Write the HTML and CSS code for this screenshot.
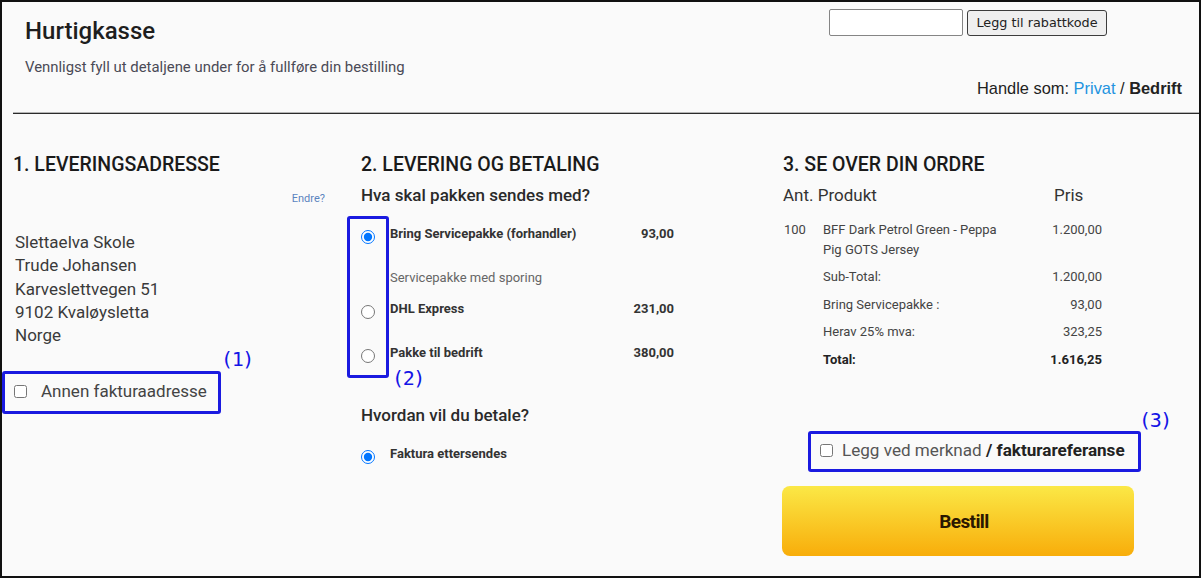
FILE: index.html
```html
<!DOCTYPE html>
<html lang="no">
<head>
<meta charset="utf-8">
<title>Hurtigkasse</title>
<link rel="stylesheet" href="styles.css">
</head>
<body>
<div class="frame">
  <header class="top">
    <div class="intro">
      <h1 class="title">Hurtigkasse</h1>
      <p class="lead">Vennligst fyll ut detaljene under for å fullføre din bestilling</p>
    </div>
    <div class="tools">
      <form class="coupon">
        <input class="coupon-input" type="text" aria-label="Rabattkode">
        <button class="coupon-btn" type="button">Legg til rabattkode</button>
      </form>
      <p class="shopas">Handle som: <a class="link-privat">Privat</a> / <b class="current">Bedrift</b></p>
    </div>
  </header>
  <div class="rule"></div>
  <main class="cols">
    <section class="col">
      <h2 class="col-title">1. LEVERINGSADRESSE</h2>
      <div class="edit-row"><a class="edit-link">Endre?</a></div>
      <address class="addr">Slettaelva Skole<br>Trude Johansen<br>Karveslettvegen 51<br>9102 Kvaløysletta<br>Norge</address>
      <label class="check-row check-billing"><input type="checkbox" class="check"><span>Annen fakturaadresse</span></label>
    </section>

    <section class="col">
      <h2 class="col-title">2. LEVERING OG BETALING</h2>
      <h3 class="sub-title">Hva skal pakken sendes med?</h3>
      <label class="opt opt-first"><input type="radio" name="ship" class="radio" checked><span class="opt-name">Bring Servicepakke (forhandler)</span><span class="opt-price">93,00</span></label>
      <p class="opt-desc">Servicepakke med sporing</p>
      <label class="opt opt-dhl"><input type="radio" name="ship" class="radio"><span class="opt-name">DHL Express</span><span class="opt-price">231,00</span></label>
      <label class="opt opt-bedrift"><input type="radio" name="ship" class="radio"><span class="opt-name">Pakke til bedrift</span><span class="opt-price">380,00</span></label>
      <h3 class="sub-title pay-title">Hvordan vil du betale?</h3>
      <label class="opt opt-pay"><input type="radio" name="pay" class="radio" checked><span class="opt-name">Faktura ettersendes</span></label>
    </section>

    <section class="col">
      <h2 class="col-title">3. SE OVER DIN ORDRE</h2>
      <div class="order-head"><span>Ant. Produkt</span><span>Pris</span></div>
      <div class="order-table">
        <span class="qty">100</span><span class="prod">BFF Dark Petrol Green - Peppa Pig GOTS Jersey</span><span class="amt">1.200,00</span>
        <span class="qty"></span><span class="prod">Sub-Total:</span><span class="amt">1.200,00</span>
        <span class="qty"></span><span class="prod">Bring Servicepakke :</span><span class="amt">93,00</span>
        <span class="qty"></span><span class="prod">Herav 25% mva:</span><span class="amt">323,25</span>
        <span class="qty"></span><span class="prod total">Total:</span><span class="amt total">1.616,25</span>
      </div>
      <label class="check-row check-note"><input type="checkbox" class="check"><span>Legg ved merknad <b class="strong">/ fakturareferanse</b></span></label>
      <button class="order-btn" type="button">Bestill</button>
    </section>
  </main>

  <div class="note note-1"></div>
  <span class="note-label label-1">(1)</span>
  <div class="note note-2"></div>
  <span class="note-label label-2">(2)</span>
  <div class="note note-3"></div>
  <span class="note-label label-3">(3)</span>
</div>
</body>
</html>
```
FILE: styles.css
```css
* { box-sizing: border-box; }

body {
  margin: 0;
  background: #ffffff;
  font-family: Roboto, "Liberation Sans", sans-serif;
}

.frame {
  position: relative;
  width: 1201px;
  height: 578px;
  border: 2px solid #111;
  background: #fafafa;
  overflow: hidden;
}

/* header */
.top {
  display: flex;
  justify-content: space-between;
  padding: 7px 17px 0 23px;
}

.title {
  margin: 8px 0 0;
  font-size: 24px;
  line-height: 28px;
  font-weight: 500;
  color: #1e1e1e;
}

.lead {
  margin: 13px 0 0;
  font-size: 14.9px;
  line-height: 18px;
  color: #4a4a56;
}

.tools {
  display: flex;
  flex-direction: column;
  align-items: flex-end;
}

.coupon {
  display: flex;
  align-items: center;
  gap: 4px;
  margin: 0 75px 0 0;
}

.coupon-input {
  width: 134px;
  height: 27px;
  border: 1px solid #858585;
  border-radius: 2px;
  background: #fff;
}

.coupon-btn {
  width: 140px;
  height: 26px;
  padding: 0;
  border: 1px solid #3c3c3c;
  border-radius: 3px;
  background: #efefef;
  font-family: "DejaVu Sans", sans-serif;
  font-size: 12.8px;
  color: #222;
}

.shopas {
  margin: 43px 0 0;
  font-family: "Liberation Sans", Arial, sans-serif;
  font-size: 16.4px;
  line-height: 18px;
  color: #222;
}

.link-privat { color: #2293df; }
.current { color: #222; }

.rule {
  margin: 15px 0 0 11px;
  border-top: 1px solid #b5b5b5;
  border-bottom: 1px solid #2a2a2a;
}

/* columns */
.cols {
  display: grid;
  grid-template-columns: 348px 422px 1fr;
  padding: 39px 0 0 11px;
}

.col-title {
  margin: 0;
  font-size: 19.5px;
  line-height: 24px;
  font-weight: 500;
  color: #1a1a1a;
}

.edit-row {
  width: 312px;
  margin-top: 15px;
  text-align: right;
  font-size: 11px;
  line-height: 14px;
}

.edit-link { color: #5b84bf; }

.addr {
  margin: 25px 0 0 2px;
  font-style: normal;
  font-size: 17px;
  line-height: 23.3px;
  color: #3a3a3a;
}

.check-row {
  display: flex;
  align-items: center;
}

.check {
  width: 13px;
  height: 13px;
  margin: 0;
}

.check-billing {
  margin-top: 34px;
  padding-left: 1px;
  font-size: 17px;
  line-height: 20px;
  color: #444;
}

.check-billing .check { margin-right: 14px; }

/* shipping */
.sub-title {
  margin: 8px 0 0;
  font-size: 17px;
  line-height: 20px;
  font-weight: 500;
  color: #2a2a2a;
}

.opt {
  display: flex;
  align-items: flex-start;
  width: 313px;
  font-size: 13px;
  line-height: 18px;
  font-weight: 700;
  color: #333;
}

.radio {
  width: 14px;
  height: 14px;
  margin: 5px 15px 0 0;
  flex: none;
}

.opt-price { margin-left: auto; }

.opt-first { margin-top: 20px; }

.opt-desc {
  margin: 25px 0 0 29px;
  font-size: 13px;
  line-height: 18px;
  color: #666;
}

.opt-dhl { margin-top: 13px; }
.opt-bedrift { margin-top: 25px; }
.pay-title { margin-top: 42px; }
.opt-pay { margin-top: 20px; }

/* order */
.order-head {
  display: grid;
  grid-template-columns: 271px auto;
  margin-top: 8px;
  font-size: 17px;
  line-height: 20px;
  color: #333;
}

.order-table {
  display: grid;
  grid-template-columns: 40px 185px 94px;
  row-gap: 8px;
  margin-top: 15px;
  font-size: 13px;
  line-height: 19.5px;
  color: #444;
}

.qty { padding-left: 1px; }
.amt { text-align: right; }
.total { font-weight: 700; color: #222; }

.check-note {
  margin: 71px 0 0 37px;
  font-size: 17.1px;
  line-height: 20px;
  color: #555;
}

.check-note .check { margin-right: 9px; }
.strong { color: #222; }

.order-btn {
  display: block;
  width: 352px;
  height: 70px;
  margin: 26px 0 0 -1px;
  padding: 0 0 0 12px;
  border: 0;
  border-radius: 8px;
  background: linear-gradient(#fbe846, #f8ad0a);
  font-family: Roboto, "Liberation Sans", sans-serif;
  font-size: 19px;
  font-weight: 700;
  letter-spacing: -0.6px;
  color: #2b1700;
}

/* annotations */
.note {
  position: absolute;
  border: 3px solid #1a1ae0;
  border-radius: 3px;
}

.note-1 { left: 0; top: 369px; width: 219px; height: 43px; }
.note-2 { left: 345px; top: 214px; width: 42px; height: 162px; }
.note-3 { left: 806px; top: 429px; width: 333px; height: 41px; }

.note-label {
  position: absolute;
  font-family: "DejaVu Sans Mono", monospace;
  font-size: 20px;
  line-height: 24px;
  letter-spacing: -1.4px;
  color: #1414e6;
}

.label-1 { left: 219px; top: 345px; }
.label-2 { left: 390px; top: 364px; }
.label-3 { left: 1137px; top: 406px; }
```
